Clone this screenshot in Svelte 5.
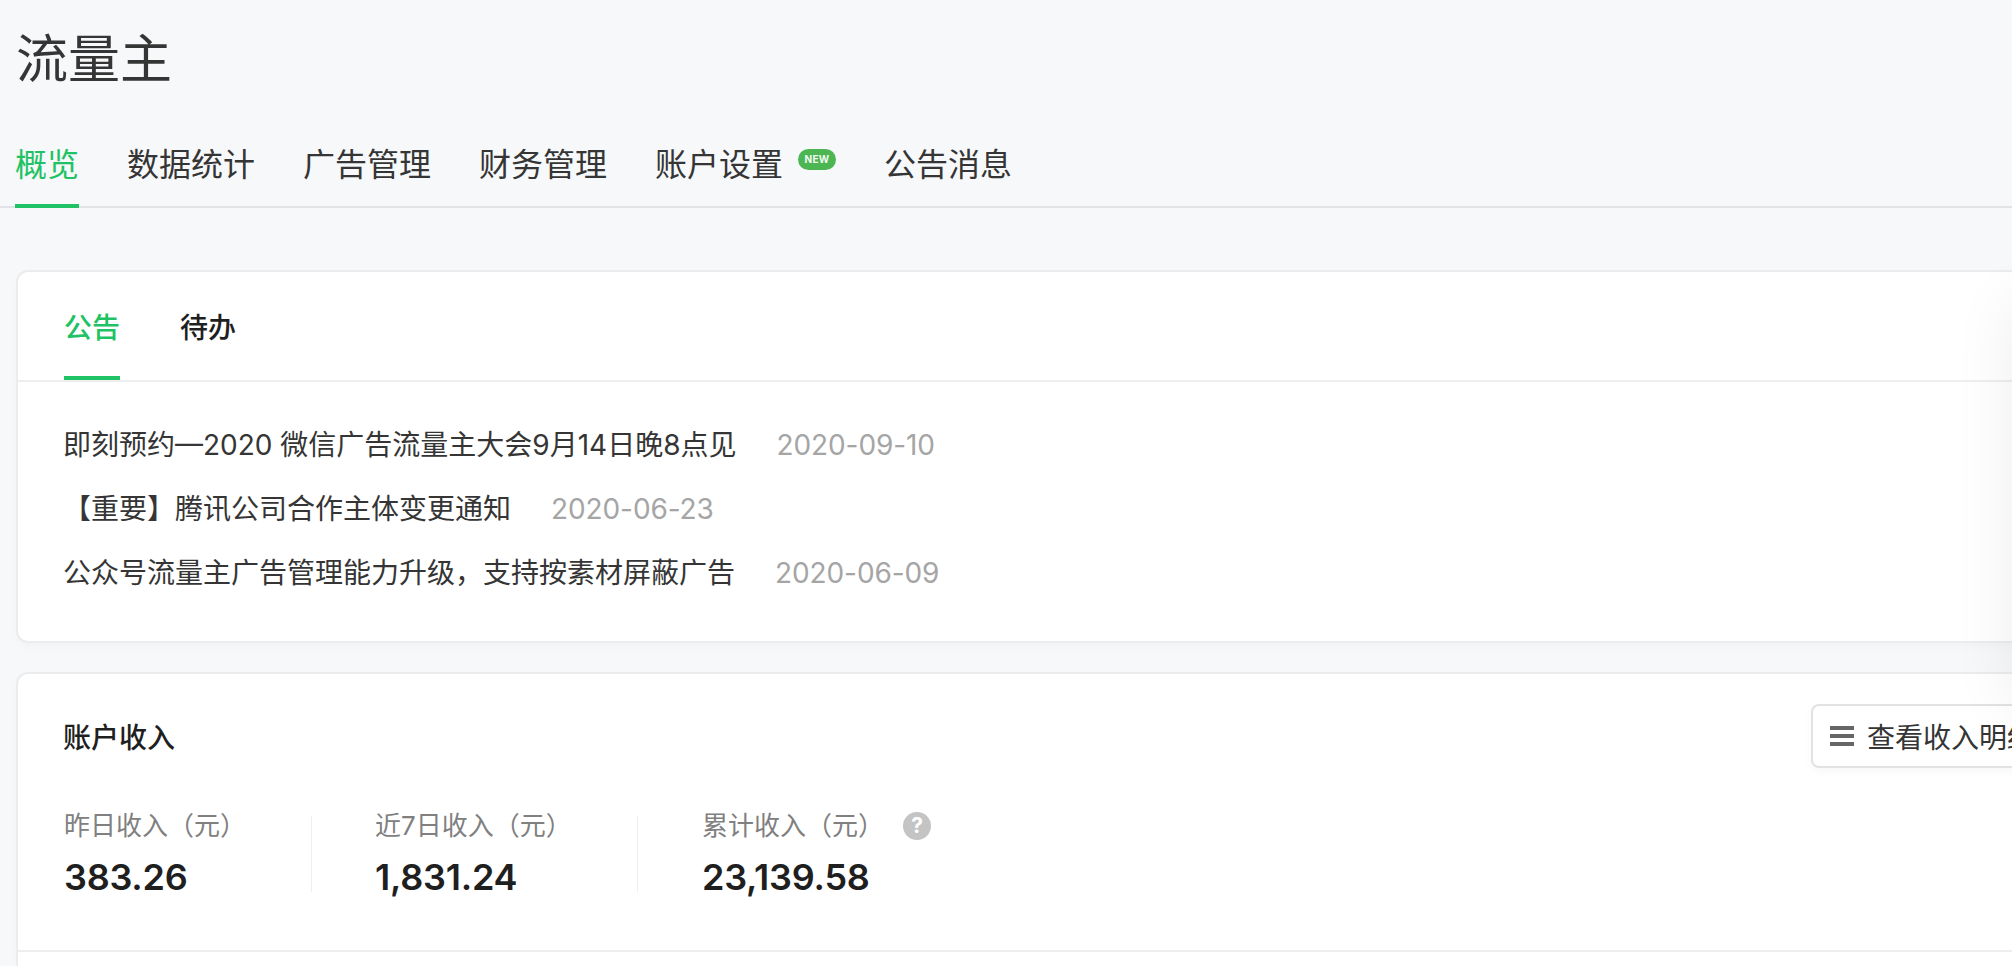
<script>
  const tabs = ['概览', '数据统计', '广告管理', '财务管理', '账户设置', '公告消息'];
  const notices = [
    { text: '即刻预约—2020 微信广告流量主大会9月14日晚8点见', date: '2020-09-10' },
    { text: '【重要】腾讯公司合作主体变更通知', date: '2020-06-23' },
    { text: '公众号流量主广告管理能力升级\uFF0C支持按素材屏蔽广告', date: '2020-06-09' }
  ];
  const stats = [
    { label: '昨日收入\uFF08元\uFF09', value: '383.26' },
    { label: '近7日收入\uFF08元\uFF09', value: '1,831.24' },
    { label: '累计收入\uFF08元\uFF09', value: '23,139.58', help: true }
  ];
</script>

<div class="viewport">
  <div class="page">
    <h1>流量主</h1>
    <nav class="nav">
      {#each tabs as t, i}
        <div class="nav-item" class:active={i === 0}>
          {t}
          {#if t === '账户设置'}<span class="new">NEW</span>{/if}
        </div>
      {/each}
    </nav>

    <section class="card notice-card">
      <div class="card-tabs">
        <div class="ct active">公告</div>
        <div class="ct">待办</div>
      </div>
      <ul class="notices">
        {#each notices as n}
          <li><span class="ntext">{n.text}</span><span class="ndate">{n.date}</span></li>
        {/each}
      </ul>
    </section>

    <section class="card income-card">
      <div class="income-head">
        <h2>账户收入</h2>
        <button class="detail">
          <svg width="24" height="20" viewBox="0 0 24 20"><path d="M0 0h24v4H0zM0 8h24v4H0zM0 16h24v4H0z" fill="#666"/></svg>
          <span>查看收入明细</span>
        </button>
      </div>
      <div class="stats">
        {#each stats as s}
          <div class="stat">
            <div class="label">{s.label}{#if s.help}<span class="help">?</span>{/if}</div>
            <div class="value">{s.value}</div>
          </div>
        {/each}
      </div>
      <div class="rule"></div>
    </section>
  </div>
  <div class="floater"></div>
</div>

<style>
  :global(body) { margin: 0; background: #f7f8fa; }
  .viewport {
    position: relative;
    width: 2012px;
    height: 966px;
    overflow: hidden;
    background: #f7f8fa;
    font-family: "Inter", "Noto Sans CJK SC", sans-serif;
    color: #353535;
  }
  .page { width: 2300px; padding-left: 16px; box-sizing: border-box; }
  h1 {
    margin: 0;
    padding-top: 24px;
    font-size: 52px;
    line-height: 72px;
    font-weight: 400;
    color: #353535;
  }
  .nav {
    display: flex;
    gap: 48px;
    margin-top: 38px;
    margin-left: -17px;
    padding-left: 16px;
    box-sizing: border-box;
    height: 74px;
    border-bottom: 2px solid #e2e3e6;
  }
  .nav-item {
    position: relative;
    height: 74px;
    box-sizing: border-box;
    font-size: 32px;
    line-height: 56px;
    padding-top: 3px;
    color: #353535;
  }
  .nav-item.active { color: #1fc264; border-bottom: 4px solid #1fc264; }
  .nav-item:nth-child(5) { margin-right: 53px; }
  .new {
    position: absolute;
    left: 143px;
    top: 15px;
    width: 38px;
    height: 21px;
    border-radius: 11px;
    background: #4cb752;
    color: #f3faf3;
    font: 700 10px/21px "Inter", sans-serif;
    text-align: center;
    letter-spacing: 0.3px;
  }
  .card {
    background: #fff;
    border: 2px solid #ebecee;
    border-right: 0;
    border-radius: 12px 0 0 12px;
    box-shadow: 0 4px 10px rgba(0, 0, 0, 0.025);
    box-sizing: border-box;
  }
  .notice-card { margin-top: 62px; height: 373px; }
  .card-tabs {
    display: flex;
    gap: 60px;
    height: 108px;
    padding-left: 46px;
    border-bottom: 2px solid #edeef0;
  }
  .ct {
    height: 108px;
    box-sizing: border-box;
    font-size: 28px;
    font-weight: 500;
    line-height: 112px;
    color: #1f1f1f;
  }
  .ct.active { color: #1fc264; border-bottom: 4px solid #1fc264; }
  .notices { list-style: none; margin: 0; padding: 31px 0 0 45px; }
  .notices li { height: 64px; line-height: 64px; font-size: 28px; white-space: nowrap; }
  .ntext { color: #353535; }
  .ndate {
    margin-left: 40px;
    color: #a5a5a5;
    font-size: 28px;
    letter-spacing: -0.1px;
  }
  .income-card { margin-top: 29px; height: 500px; }
  .income-head {
    display: flex;
    height: 96px;
    align-items: center;
    padding-left: 45px;
    position: relative;
  }
  h2 {
    margin: 28px 0 0;
    font-size: 28px;
    font-weight: 500;
    color: #1f1f1f;
  }
  .detail {
    position: absolute;
    left: 1793px;
    top: 30px;
    width: 320px;
    height: 64px;
    display: flex;
    align-items: center;
    gap: 13px;
    padding: 0 0 0 17px;
    background: #fff;
    border: 2px solid #e2e2e2;
    border-radius: 8px;
    box-shadow: 0 4px 8px rgba(0, 0, 0, 0.03);
    font: inherit;
    font-size: 28px;
    color: #353535;
    box-sizing: border-box;
  }
  .stats {
    display: flex;
    margin-top: 46px;
    padding-left: 46px;
  }
  .stat { height: 76px; }
  .stat:nth-child(1) { width: 247px; border-right: 1px solid #eeeff0; }
  .stat:nth-child(2) { width: 326px; padding-left: 63px; box-sizing: border-box; border-right: 1px solid #eeeff0; }
  .stat:nth-child(3) { padding-left: 64px; }
  .label {
    display: flex;
    align-items: center;
    font-size: 26px;
    line-height: 36px;
    color: #808080;
    margin-top: -8px;
    white-space: nowrap;
  }
  .help {
    width: 28px;
    height: 28px;
    border-radius: 50%;
    background: #c4c4c4;
    color: #fff;
    font: 700 21px/28px "Inter", sans-serif;
    text-align: center;
    margin-left: 19px;
  }
  .value {
    margin-top: 11px;
    font: 600 36px/44px "Inter", sans-serif;
    color: #1f1f1f;
    white-space: nowrap;
    letter-spacing: -0.25px;
  }
  .rule { margin-top: 58px; height: 2px; background: #edeef0; }
  .floater {
    position: absolute;
    left: 2012px;
    top: 300px;
    width: 300px;
    height: 410px;
    box-shadow: 0 0 60px rgba(0, 0, 0, 0.07);
  }
</style>
